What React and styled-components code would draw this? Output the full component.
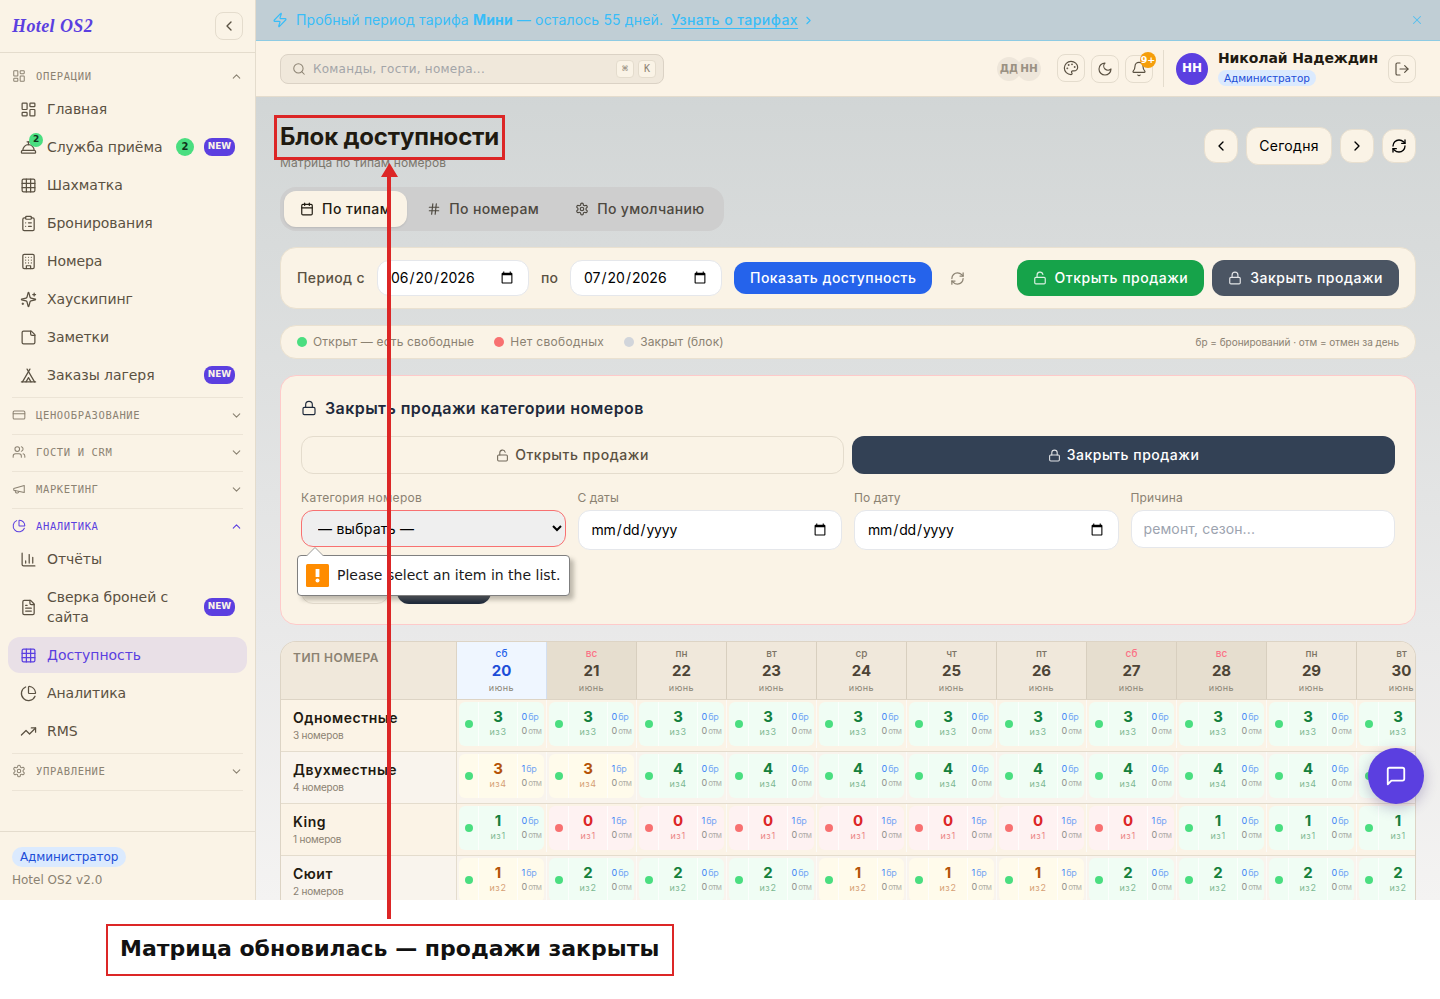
import React from "react";
import styled, { createGlobalStyle, css } from "styled-components";
import {
  LayoutDashboard, ConciergeBell, Grid3x3, ClipboardList,  Tent,
  CreditCard, Users, ChartPie, ChartColumn, TrendingUp,
  ChevronLeft, ChevronRight, ChevronUp, ChevronDown, Zap, X, Search, Bell, LogOut,
  RefreshCw, Calendar, Hash, Lock, LockOpen,
} from "lucide-react";

const UI = `"DejaVu Sans", sans-serif`;
const INTER = `Inter, sans-serif`;
const MONO = `"DejaVu Sans Mono", monospace`;
const violet = "#5b3fe0";
const cream = "#faf3e6";
const line = "#e4dccd";
const red = "#dc2626";

const Global = createGlobalStyle`
  *, *::before, *::after { box-sizing: border-box; }
  body { margin: 0; background: #fff; font-family: ${UI}; color: #1f1a10; }
  button, input, select { font: inherit; margin: 0; }
  svg { display: block; flex: none; }
`;

/* Extra tracking for a run of text, in pixels */
const T = styled.span`letter-spacing: ${(p) => p.$ls}px; position: relative; top: ${(p) => p.$up ? -p.$up : 0}px;`;

const Page = styled.div`position: relative; width: 1440px; height: 999px; overflow: hidden; background: #fff;`;
const Shell = styled.div`display: flex; height: 900px; overflow: hidden;`;

/* Sidebar */
const Sidebar = styled.aside`
  width: 256px; flex: none; display: flex; flex-direction: column;
  background: ${cream}; border-right: 1px solid ${line};
`;
const Brand = styled.div`
  height: 53px; flex: none; padding: 0 12px; display: flex; align-items: center; justify-content: space-between;
  border-bottom: 1px solid ${line};
`;
const Logo = styled.span`
  font: italic 700 18px/24px "Liberation Serif", serif; letter-spacing: 0.4px; color: ${violet};
`;
const IconButton = styled.button`
  width: 28px; height: 28px; padding: 0; display: grid; place-items: center; position: relative; flex: none;
  border: 1px solid ${line}; border-radius: 8px; background: transparent; color: #5a5142;
  margin-top: ${(p) => p.$lift || 0}px;
`;
const Nav = styled.nav`flex: 1; padding: 6px 12px 0;`;
const Section = styled.section`padding-bottom: 4px; border-bottom: 1px solid #ece4d6;`;
const SectionHead = styled.div`
  height: 32px; padding: 2px 0 0; display: flex; align-items: center; gap: 10px;
  font: 400 10.5px/16px ${MONO}; letter-spacing: 0.63px; text-transform: uppercase;
  color: ${(p) => (p.$active ? violet : "#8b8272")};
  > span { flex: 1; }
`;
const Item = styled.a`
  min-height: 36px; margin: 0 -4px 2px; padding: 8px 12px; display: flex; align-items: center; gap: 10px;
  border-radius: 12px; font-size: 14px; line-height: 20px; letter-spacing: -0.06px; position: relative;
  color: ${(p) => (p.$active ? violet : "#5a5142")};
  background: ${(p) => (p.$active ? "#e9e0e7" : "transparent")};
  &:last-child { margin-bottom: 0; }
`;
const ItemText = styled.span`flex: 1;`;
const New = styled.span`
  width: 31px; height: 18px; border-radius: 8px; background: ${violet}; color: #faf3e6;
  font: 700 9px/17px ${UI}; letter-spacing: -0.1px; text-align: center;
`;
const Count = styled.span`
  width: 18px; height: 18px; border-radius: 50%; background: #4ade80; color: #10331c;
  font: 700 10px/18px ${UI}; text-align: center;
`;
const MiniCount = styled.span`
  position: absolute; left: 21px; top: 4px; width: 14px; height: 14px; border-radius: 50%;
  background: #4ade80; color: #10331c; font: 700 9px/13px ${UI}; text-align: center;
`;
const SideFoot = styled.div`
  height: 69px; flex: none; padding: 15px 12px; border-top: 1px solid ${line};
  font-size: 12px; line-height: 16px; color: #8b8272;
`;
const RoleTag = styled.span`
  display: block; width: fit-content; border-radius: 10px; background: #dbeafe; color: #1d4ed8;
  font-size: ${(p) => (p.$small ? 10.5 : 12)}px; line-height: ${(p) => (p.$small ? 16 : 20)}px;
  letter-spacing: -0.1px;
  padding: 0 ${(p) => (p.$small ? 6 : 8)}px; margin-bottom: ${(p) => (p.$small ? 0 : 5)}px;
`;

/* Main */
const Main = styled.main`
  flex: 1; min-width: 0; display: flex; flex-direction: column;
  background: linear-gradient(180deg, #cdd2d4 0%, #d2d6d6 12%, #e9e9e9 70%, #f4f3f2 100%);
`;
const Banner = styled.div`
  height: 41px; flex: none; padding: 0 16px; display: flex; align-items: center;
  background: #c0ced5; border-bottom: 1px solid #8ecbe3; color: #38bdf8;
  font: 400 14px/20px ${INTER};
  > p { margin: 0 8px 0 8px; letter-spacing: 0.15px; }
  b { font-weight: 700; }
`;
const BannerLink = styled.a`font-weight: 500; letter-spacing: 0.45px; text-decoration: underline; text-underline-offset: 3px; margin-right: 4px;`;
const Spacer = styled.span`flex: 1;`;

const TopBar = styled.header`
  height: 56px; flex: none; padding: 0 24px; display: flex; align-items: center;
  background: #fbf3e6; border-bottom: 1px solid ${line};
`;
const SearchBox = styled.div`
  width: 384px; height: 30px; padding: 0 7px 0 11px; display: flex; align-items: center; gap: 4px;
  border: 1px solid #dbd2c5; border-radius: 8px; background: #f0e8db; color: #8b8272;
  > span { flex: 1; margin-left: 3px; font-size: 12px; color: #a3a5a8; letter-spacing: 0.23px; }
`;
const Kbd = styled.kbd`
  width: 18px; height: 18px; border: 1px solid ${line}; border-radius: 4px; background: ${cream};
  font: 400 10px/16px ${MONO}; text-align: center; color: #8b8272;
`;
const Presence = styled.span`
  width: 24px; height: 24px; border-radius: 50%; background: #eee6da; color: #9a9183; overflow: hidden;
  font: 700 10.5px/23px ${UI}; text-align: center; position: relative;
  margin-left: ${(p) => (p.$overlap ? -4 : 0)}px;
`;
const Tools = styled.div`display: flex; gap: 6px; margin: 0 10px 0 16px;`;
const BellBadge = styled.span`
  position: absolute; right: -4px; top: -4px; width: 16px; height: 16px; border-radius: 50%;
  background: #f59e0b; color: #fff; font: 700 9.5px/15px ${UI}; text-align: center;
`;
const Rule = styled.span`width: 1px; height: 37px; background: ${line}; margin-right: 12px;`;
const Avatar = styled.span`
  width: 32px; height: 32px; border-radius: 50%; background: ${violet}; color: #fff;
  font: 700 12px/31px ${UI}; text-align: center; margin-right: 10px;
`;
const Person = styled.div`
  width: 160px; margin-right: 10px; margin-top: -4px; white-space: nowrap;
  > strong { display: block; font-size: 14px; line-height: 20px; letter-spacing: -0.1px; color: #1f1a10; padding-bottom: 2px; }
`;

const Content = styled.div`
  flex: 1; min-height: 0; overflow: hidden; padding: 24px 24px 0;
  display: flex; flex-direction: column; gap: 16px; font-family: ${INTER};
  > * { flex: none; }
`;
const PageHead = styled.div`height: 50px; display: flex; align-items: center; justify-content: space-between;`;
const Title = styled.h1`margin: 0; font-size: 24px; line-height: 32px; font-weight: 700; letter-spacing: -0.2px; color: #1f1a10;`;
const Subtitle = styled.p`margin: 2px 0 0; font-size: 12px; line-height: 16px; letter-spacing: 0.1px; color: #7c776d;`;
const DateNav = styled.div`display: flex; gap: 8px; align-items: center;`;
const NavButton = styled.button`
  height: ${(p) => (p.$wide ? 38 : 34)}px; width: ${(p) => (p.$wide ? 86 : 34)}px; padding: 0;
  display: grid; place-items: center; border: 1px solid #e8dfcf; border-radius: 12px;
  background: ${cream}; color: #000; font: 400 14px/20px ${INTER}; letter-spacing: 0.3px;
`;
const Tabs = styled.div`
  width: 444px; height: 44px; padding: 4px; display: flex; gap: 4px; border-radius: 16px; background: #cecece;
`;
const Tab = styled.div`
  padding: 0 16px; display: flex; align-items: center; gap: 8px; border-radius: 12px; white-space: nowrap;
  font-size: 14px; font-weight: 500; color: #4d483f;
  ${(p) => p.$active && css`background: ${cream}; color: #1f1a10; box-shadow: 0 1px 2px rgba(0, 0, 0, 0.1);`}
`;
const Card = styled.div`border: 1px solid #eae1d0; border-radius: 16px; background: ${cream};`;
const Filters = styled(Card)`
  height: 62px; padding: 0 16px; display: flex; align-items: center; gap: 12px;
  font-size: 14px; font-weight: 500; color: #5a5142;
`;
const fieldBox = css`
  border: 1px solid #e5e7eb; border-radius: 12px; background: #fff; color: #000;
  font: 400 14px/20px ${INTER};
`;
const DateField = styled.input.attrs({ type: "date" })`
  ${fieldBox}
  width: ${(p) => (p.$fill ? "100%" : "152px")}; height: ${(p) => (p.$fill ? 40 : 36)}px;
  padding: ${(p) => (p.$fill ? "8px 12px" : "6px 12px")};
  letter-spacing: ${(p) => (p.$fill ? -0.15 : 0)}px;
`;
const TextField = styled.input`
  ${fieldBox} width: 100%; height: 38px; padding: 7px 12px 9px; letter-spacing: 0.12px;
  &::placeholder { color: #9ca3af; opacity: 1; }
`;
const SelectField = styled.select`
  width: 100%; height: 37px; padding: 8px 12px; border: 1px solid #f87171; border-radius: 12px;
  background: #efefef; color: #000; font: 400 14px/normal ${INTER}; letter-spacing: 0.25px;
`;
const Action = styled.button`
  height: ${(p) => p.$h || 36}px; padding: 0 16px; display: flex; align-items: center; justify-content: center;
  gap: ${(p) => p.$gap || 8}px;
  border: ${(p) => (p.$outline ? "1px solid #e4dccd" : "0")}; border-radius: 12px;
  background: ${(p) => p.$bg || "transparent"}; color: ${(p) => (p.$outline ? "#5a5142" : "#fff")};
  font: 500 14px/20px ${INTER}; letter-spacing: ${(p) => p.$ls || 0.53}px; white-space: nowrap;
  > svg { opacity: 0.85; }
`;
const Refresh = styled.span`padding: 0 5px 0 6px; color: #8b8272;`;
const Pair = styled.div`display: grid; grid-auto-flow: column; grid-auto-columns: ${(p) => (p.$fill ? "1fr" : "auto")}; gap: 8px;`;
const Legend = styled(Card)`
  height: 34px; padding: 0 16px 1px; display: flex; align-items: center; gap: 20px;
  font-size: 12px; color: #8b8272;
  > small { font-size: 10px; letter-spacing: -0.03px; padding-top: 1px; }
`;
const Key = styled.span`display: flex; align-items: center; gap: 6px;`;
const Dot = styled.i`width: ${(p) => p.$s || 10}px; height: ${(p) => p.$s || 10}px; border-radius: 50%; background: ${(p) => p.$c};`;

const CloseCard = styled(Card)`
  height: 250px; padding: 20px; border-color: #fecaca; display: flex; flex-direction: column;
`;
const CardTitle = styled.h2`
  margin: 0 0 16px; height: 24px; display: flex; align-items: center; gap: 8px;
  font-size: 16px; font-weight: 600; letter-spacing: 0.42px; color: #1e293b;
`;
const Fields = styled.div`
  display: grid; grid-template-columns: repeat(4, 1fr); gap: 12px; align-items: start; margin: 16px 0; height: 60px; flex: none;
`;
const Field = styled.label`
  display: block; font-size: 12px; color: #8b8272;
  > span { display: block; line-height: 16px; margin-bottom: 4px; letter-spacing: ${(p) => p.$ls || 0.05}px; }
  > input, > select { display: block; }
`;
const CardFoot = styled.div`display: flex; gap: 8px; margin-top: auto;`;
const FootButton = styled.button`
  width: ${(p) => p.$w}px; height: 38px; border-radius: 12px;
  border: ${(p) => (p.$dark ? "0" : "1px solid #e4dccd")}; background: ${(p) => (p.$dark ? "#1e293b" : "transparent")};
`;

const TableCard = styled.div`
  height: 320px; border: 1px solid #ddd4c5; border-radius: 16px 16px 0 0; border-bottom: 0; overflow: hidden; background: ${cream};
`;
const Row = styled.div`
  display: grid; grid-template-columns: 176px repeat(11, 90px); width: 1166px; height: 52px;
  border-bottom: 1px solid #e4dccd; background: ${(p) => (p.$alt ? "#f9f4ed" : "#fbf3e6")};
`;
const HeadRow = styled(Row)`height: 58px; border-bottom-color: #ddd4c5; background: #f0e8db;`;
const HeadType = styled.div`
  padding: 8px 12px; border-right: 1px solid #ddd4c5; font-size: 12px; line-height: 16px; font-weight: 600;
  letter-spacing: 0.5px; color: #8b8272;
`;
const Day = styled.div`
  border-right: 1px solid ${(p) => (p.$today ? "#d3dff0" : "#d8cfbf")}; text-align: center; padding-top: 4px;
  background: ${(p) => (p.$today ? "#eff6ff" : p.$weekend ? "#e6decf" : "transparent")};
  > small { display: block; font-size: 10px; line-height: 15px; font-weight: 500;
    color: ${(p) => (p.$today ? "#2563eb" : p.$weekend ? "#fb7185" : "#7c7364")}; }
  > b { display: block; font-size: 15px; line-height: 20px; font-weight: 700; color: ${(p) => (p.$today ? "#1d4ed8" : "#4d4436")}; }
  > em { display: block; font-style: normal; font-size: 9px; line-height: 14px; letter-spacing: 0.5px; color: #8b8577; }
`;
const Type = styled.div`
  padding: 8px 12px; border-right: 1px solid #e4dccd;
  > b { display: block; font-size: 14px; line-height: 20px; font-weight: 600; letter-spacing: 0.5px; color: #1f1a10; }
  > small { display: block; font-size: 10px; line-height: 15px; letter-spacing: -0.2px; color: #8b8272; }
`;
const tones = {
  ok: { bg: "#f0fdf4", fg: "#15803d", dot: "#4ade80" },
  part: { bg: "#fffbeb", fg: "#b45309", dot: "#4ade80" },
  none: { bg: "#fef2f2", fg: "#dc2626", dot: "#f87171" },
};
const Slot = styled.div`height: 48px; padding: 2px 2px 2px; border-right: 1px solid #fbfaf8;`;
const Tile = styled.div`
  width: 85px; height: 44px; display: grid; grid-template-columns: 19px 39px 27px; border-radius: 6px;
  background: ${(p) => tones[p.$t].bg}; color: ${(p) => tones[p.$t].fg};
  > div { display: flex; flex-direction: column; align-items: center; justify-content: center; }
  > div + div { border-left: 1px solid rgba(255, 255, 255, 0.75); }
`;
const Free = styled.b`font-size: 15px; line-height: 16px; font-weight: 700;`;
const Total = styled.span`font-size: 9px; line-height: 14px; letter-spacing: 0.4px; word-spacing: -2.6px; opacity: 0.55;`;
const Stat = styled.span`
  width: 100%; padding-left: 3.5px; font-size: 9px; line-height: 14px; white-space: nowrap; color: ${(p) => p.$c};
  > i { font-style: normal; opacity: 0.7; margin-left: 1px; font-size: ${(p) => p.$s}px; letter-spacing: ${(p) => (p.$s < 9 ? -0.6 : -0.2)}px; }
`;

/* Overlays */
const Fab = styled.button`
  position: absolute; left: 1368px; top: 748px; width: 56px; height: 56px; padding: 0; border: 0; border-radius: 50%;
  display: grid; place-items: center; background: ${violet}; color: #fff; box-shadow: 0 4px 14px rgba(60, 40, 120, 0.3);
`;
const Tip = styled.div`
  position: absolute; left: 297px; top: 555px; width: 273px; height: 41px; padding: 0 8px 1px; display: flex; align-items: center; gap: 8px;
  border: 1px solid #7f7f7f; border-radius: 4px; background: #fff; color: #1a1a1a; font-size: 14px; white-space: nowrap;
  box-shadow: 4px 4px 4px rgba(120, 115, 105, 0.45);
`;
const TipArrow = styled.svg`position: absolute; left: 8px; top: -9px;`;
const TitleFrame = styled.div`position: absolute; left: 274px; top: 115px; width: 231px; height: 45px; border: 3px solid ${red};`;
const Arrow = styled.svg`position: absolute; left: 380px; top: 162px;`;
const Caption = styled.div`
  position: absolute; left: 106px; top: 924px; width: 568px; height: 52px; padding-left: 12px; border: 2px solid ${red};
  font: 700 22px/45px ${UI}; color: #111; white-space: nowrap;
`;

const glyph = (children) => function Glyph({ size = 24, strokeWidth = 2 }) {
  return (
    <svg width={size} height={size} viewBox="0 0 24 24" fill="none" stroke="currentColor" strokeWidth={strokeWidth} strokeLinecap="round" strokeLinejoin="round">
      {children}
    </svg>
  );
};
const Horn = glyph(<><path d="m3 11 18-5v12L3 14v-3z" /><path d="M11.6 16.8a3 3 0 1 1-5.8-1.6" /></>);
const Tower = glyph(<>
  <rect width="16" height="20" x="4" y="2" rx="2" ry="2" /><path d="M9 22v-4h6v4" />
  <path d="M8 6h.01M16 6h.01M12 6h.01M12 10h.01M12 14h.01M16 10h.01M16 14h.01M8 10h.01M8 14h.01" />
</>);
const Stars = glyph(<>
  <path d="M9.937 15.5A2 2 0 0 0 8.5 14.063l-6.135-1.582a.5.5 0 0 1 0-.962L8.5 9.936A2 2 0 0 0 9.937 8.5l1.582-6.135a.5.5 0 0 1 .963 0L14.063 8.5A2 2 0 0 0 15.5 9.937l6.135 1.581a.5.5 0 0 1 0 .964L15.5 14.063a2 2 0 0 0-1.437 1.437l-1.582 6.135a.5.5 0 0 1-.963 0z" />
  <path d="M20 3v4M22 5h-4M4 17v2M5 18H3" />
</>);
const Note = glyph(<><path d="M16 3H5a2 2 0 0 0-2 2v14a2 2 0 0 0 2 2h14a2 2 0 0 0 2-2V8Z" /><path d="M15 3v4a2 2 0 0 0 2 2h4" /></>);
const Sheet = glyph(<>
  <path d="M15 2H6a2 2 0 0 0-2 2v16a2 2 0 0 0 2 2h12a2 2 0 0 0 2-2V7Z" /><path d="M14 2v4a2 2 0 0 0 2 2h4" />
  <path d="M10 9H8M16 13H8M16 17H8" />
</>);
const Paints = glyph(<>
  <circle cx="13.5" cy="6.5" r=".5" fill="currentColor" /><circle cx="17.5" cy="10.5" r=".5" fill="currentColor" />
  <circle cx="8.5" cy="7.5" r=".5" fill="currentColor" /><circle cx="6.5" cy="12.5" r=".5" fill="currentColor" />
  <path d="M12 2C6.5 2 2 6.5 2 12s4.5 10 10 10c.926 0 1.648-.746 1.648-1.688 0-.437-.18-.835-.437-1.125-.29-.289-.438-.652-.438-1.125a1.64 1.64 0 0 1 1.668-1.668h1.996c3.051 0 5.555-2.503 5.555-5.554C21.965 6.012 17.461 2 12 2z" />
</>);
const Crescent = glyph(<path d="M12 3a6 6 0 0 0 9 9 9 9 0 1 1-9-9Z" />);
const Gear = glyph(<>
  <path d="M12.22 2h-.44a2 2 0 0 0-2 2v.18a2 2 0 0 1-1 1.73l-.43.25a2 2 0 0 1-2 0l-.15-.08a2 2 0 0 0-2.73.73l-.22.38a2 2 0 0 0 .73 2.73l.15.1a2 2 0 0 1 1 1.72v.51a2 2 0 0 1-1 1.74l-.15.09a2 2 0 0 0-.73 2.73l.22.38a2 2 0 0 0 2.73.73l.15-.08a2 2 0 0 1 2 0l.43.25a2 2 0 0 1 1 1.73V20a2 2 0 0 0 2 2h.44a2 2 0 0 0 2-2v-.18a2 2 0 0 1 1-1.73l.43-.25a2 2 0 0 1 2 0l.15.08a2 2 0 0 0 2.73-.73l.22-.39a2 2 0 0 0-.73-2.73l-.15-.08a2 2 0 0 1-1-1.74v-.5a2 2 0 0 1 1-1.74l.15-.09a2 2 0 0 0 .73-2.73l-.22-.38a2 2 0 0 0-2.73-.73l-.15.08a2 2 0 0 1-2 0l-.43-.25a2 2 0 0 1-1-1.73V4a2 2 0 0 0-2-2z" />
  <circle cx="12" cy="12" r="3" />
</>);
const Bubble = glyph(<path d="M21 15a2 2 0 0 1-2 2H7l-4 4V5a2 2 0 0 1 2-2h14a2 2 0 0 1 2 2z" />);

const operations = [
  [LayoutDashboard, "Главная"],
  [ConciergeBell, "Служба приёма", { count: 2, fresh: true }],
  [Grid3x3, "Шахматка"],
  [ClipboardList, "Бронирования"],
  [Tower, "Номера"],
  [Stars, "Хаускипинг"],
  [Note, "Заметки"],
  [Tent, "Заказы лагеря", { fresh: true }],
];
const analytics = [
  [ChartColumn, "Отчёты"],
  [Sheet, "Сверка броней с сайта", { fresh: true }],
  [Grid3x3, "Доступность", { active: true }],
  [ChartPie, "Аналитика"],
  [TrendingUp, "RMS"],
];
const sections = [
  [LayoutDashboard, "Операции", operations],
  [CreditCard, "Ценообразование"],
  [Users, "Гости и CRM"],
  [Horn, "Маркетинг"],
  [ChartPie, "Аналитика", analytics, true],
  [Gear, "Управление"],
];
const days = ["сб", "вс", "пн", "вт", "ср", "чт", "пт", "сб", "вс", "пн", "вт"];
const rooms = [
  ["Одноместные", 3, [3, 3, 3, 3, 3, 3, 3, 3, 3, 3, 3]],
  ["Двухместные", 4, [3, 3, 4, 4, 4, 4, 4, 4, 4, 4, 4]],
  ["King", 1, [1, 0, 0, 0, 0, 0, 0, 0, 1, 1, 1]],
  ["Сюит", 2, [1, 2, 2, 2, 1, 1, 1, 2, 2, 2, 2]],
];

function NavSection({ icon: Icon, label, items, active }) {
  const Chevron = items ? ChevronUp : ChevronDown;
  return (
    <Section>
      <SectionHead $active={active}>
        <Icon size={14} strokeWidth={1.75} /><span>{label}</span><Chevron size={13} strokeWidth={2} />
      </SectionHead>
      {items && items.map(([I, text, o = {}]) => (
        <Item key={text} $active={o.active}>
          <I size={17} strokeWidth={1.75} />
          {o.count && <MiniCount>{o.count}</MiniCount>}
          <ItemText>{text}</ItemText>
          {o.count && <Count>{o.count}</Count>}
          {o.fresh && <New>NEW</New>}
        </Item>
      ))}
    </Section>
  );
}

function Cell({ free, total, cut }) {
  const t = free === 0 ? "none" : free < total ? "part" : "ok";
  return (
    <Slot>
      <Tile $t={t}>
        <div><Dot $s={8} $c={tones[t].dot} /></div>
        <div><Free>{free}</Free><Total>из {total}</Total></div>
        <div>
          {!cut && <Stat $c="#3b82f6" $s={9}>{total - free}<i>бр</i></Stat>}
          {!cut && <Stat $c="#8f8f8a" $s={8}>0<i>отм</i></Stat>}
        </div>
      </Tile>
    </Slot>
  );
}

export default function App() {
  return (
    <Page>
      <Global />
      <Shell>
        <Sidebar>
          <Brand><Logo>Hotel OS2</Logo><IconButton><ChevronLeft size={16} /></IconButton></Brand>
          <Nav>
            {sections.map(([icon, label, items, active]) => (
              <NavSection key={label} icon={icon} label={label} items={items} active={active} />
            ))}
          </Nav>
          <SideFoot><RoleTag>Администратор</RoleTag>Hotel OS2 v2.0</SideFoot>
        </Sidebar>
        <Main>
          <Banner>
            <Zap size={16} strokeWidth={1.75} />
            <p>Пробный период тарифа <b>Мини</b> — осталось 55 дней.</p>
            <BannerLink>Узнать о тарифах</BannerLink>
            <ChevronRight size={13} />
            <Spacer />
            <X size={14} strokeWidth={1.75} opacity={0.8} />
          </Banner>
          <TopBar>
            <SearchBox>
              <Search size={14} strokeWidth={1.75} /><span>Команды, гости, номера...</span><Kbd>⌘</Kbd><Kbd>K</Kbd>
            </SearchBox>
            <Spacer />
            <Presence>ДД</Presence><Presence $overlap>НН</Presence>
            <Tools>
              <IconButton $lift={-1}><Paints size={16} strokeWidth={1.75} /></IconButton>
              <IconButton><Crescent size={16} strokeWidth={1.75} /></IconButton>
              <IconButton><Bell size={16} strokeWidth={1.75} /><BellBadge>9+</BellBadge></IconButton>
            </Tools>
            <Rule />
            <Avatar>НН</Avatar>
            <Person><strong>Николай Надеждин</strong><RoleTag $small>Администратор</RoleTag></Person>
            <IconButton><LogOut size={16} strokeWidth={1.75} /></IconButton>
          </TopBar>
          <Content>
            <PageHead>
              <div><Title>Блок доступности</Title><Subtitle>Матрица по типам номеров</Subtitle></div>
              <DateNav>
                <NavButton><ChevronLeft size={16} /></NavButton>
                <NavButton $wide>Сегодня</NavButton>
                <NavButton><ChevronRight size={16} /></NavButton>
                <NavButton><RefreshCw size={16} /></NavButton>
              </DateNav>
            </PageHead>
            <Tabs>
              <Tab $active><Calendar size={14} /><T $ls={0.5} $up={1}>По типам</T></Tab>
              <Tab><Hash size={14} /><T $ls={0.35} $up={1}>По номерам</T></Tab>
              <Tab><Gear size={14} /><T $ls={0.35} $up={1}>По умолчанию</T></Tab>
            </Tabs>
            <Filters>
              <T $ls={0.38} $up={1}>Период с</T>
              <DateField defaultValue="2026-06-20" />
              <T $ls={0.1} $up={1}>по</T>
              <DateField defaultValue="2026-07-20" />
              <Action $h={32} $ls={0.47} $bg="#2563eb">Показать доступность</Action>
              <Refresh><RefreshCw size={15} /></Refresh>
              <Spacer />
              <Pair>
                <Action $bg="#16a34a"><LockOpen size={14} />Открыть продажи</Action>
                <Action $bg="#4b5563"><Lock size={14} />Закрыть продажи</Action>
              </Pair>
            </Filters>
            <Legend>
              <Key><Dot $c="#4ade80" /><T $ls={0.17}>Открыт — есть свободные</T></Key>
              <Key><Dot $c="#f87171" /><T $ls={0.3}>Нет свободных</T></Key>
              <Key><Dot $c="#d1d5db" /><T $ls={0.1}>Закрыт (блок)</T></Key>
              <Spacer />
              <small>бр = бронирований · отм = отмен за день</small>
            </Legend>
            <CloseCard>
              <CardTitle><Lock size={16} strokeWidth={1.75} />Закрыть продажи категории номеров</CardTitle>
              <Pair $fill>
                <Action $h={38} $outline $gap={6}><LockOpen size={13} />Открыть продажи</Action>
                <Action $h={38} $bg="#334155" $gap={6}><Lock size={13} />Закрыть продажи</Action>
              </Pair>
              <Fields>
                <Field $ls={0.32}><span>Категория номеров</span><SelectField><option>— выбрать —</option></SelectField></Field>
                <Field><span>С даты</span><DateField $fill /></Field>
                <Field><span>По дату</span><DateField $fill /></Field>
                <Field $ls={0.15}><span>Причина</span><TextField placeholder="ремонт, сезон..." /></Field>
              </Fields>
              <CardFoot><FootButton $w={88} /><FootButton $w={94} $dark /></CardFoot>
            </CloseCard>
            <TableCard>
              <HeadRow>
                <HeadType>ТИП НОМЕРА</HeadType>
                {days.map((d, i) => (
                  <Day key={i} $today={i === 0} $weekend={d === "сб" || d === "вс"}>
                    <small>{d}</small><b>{20 + i}</b><em>июнь</em>
                  </Day>
                ))}
              </HeadRow>
              {rooms.map(([name, total, free], r) => (
                <Row key={name} $alt={r % 2 === 1}>
                  <Type><b>{name}</b><small>{total} номеров</small></Type>
                  {free.map((f, i) => <Cell key={i} free={f} total={total} cut={i === free.length - 1} />)}
                </Row>
              ))}
            </TableCard>
          </Content>
        </Main>
      </Shell>

      <Fab><Bubble size={22} /></Fab>
      <Tip>
        <TipArrow width="18" height="9" viewBox="0 0 18 9">
          <path d="M0.5 9 L9 0.5 L17.5 9" fill="#fff" stroke="#9a9a9a" strokeWidth="1" />
        </TipArrow>
        <svg width="23" height="23" viewBox="0 0 23 23">
          <rect width="23" height="23" rx="1.5" fill="#ff8c00" />
          <path d="M9.6 5h3.8v8h-3.8z" fill="#fff" /><circle cx="11.5" cy="16.6" r="2" fill="#fff" />
        </svg>
        Please select an item in the list.
      </Tip>
      <TitleFrame />
      <Arrow width="19" height="757" viewBox="0 0 19 757">
        <path d="M9.5 1 L18 15 H11 V757 H7 V15 H1 Z" fill={red} />
      </Arrow>
      <Caption>Матрица обновилась — продажи закрыты</Caption>
    </Page>
  );
}
